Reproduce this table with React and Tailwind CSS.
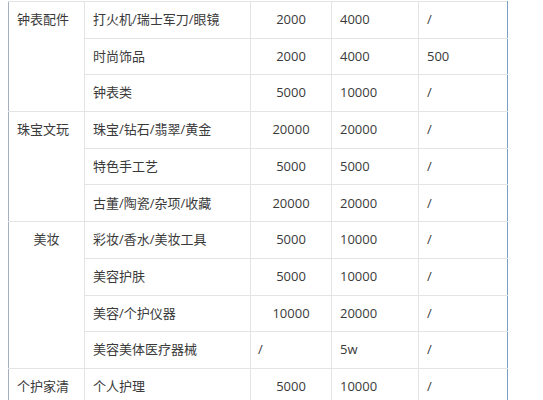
import React from "react";

const rows = [
  { g: "钟表配件", span: 3, name: "打火机/瑞士军刀/眼镜", a: "2000", b: "4000", c: "/" },
  { name: "时尚饰品", a: "2000", b: "4000", c: "500" },
  { name: "钟表类", a: "5000", b: "10000", c: "/" },
  { g: "珠宝文玩", span: 3, name: "珠宝/钻石/翡翠/黄金", a: "20000", b: "20000", c: "/" },
  { name: "特色手工艺", a: "5000", b: "5000", c: "/" },
  { name: "古董/陶瓷/杂项/收藏", a: "20000", b: "20000", c: "/" },
  { g: "美妆", span: 4, center: true, name: "彩妆/香水/美妆工具", a: "5000", b: "10000", c: "/" },
  { name: "美容护肤", a: "5000", b: "10000", c: "/" },
  { name: "美容/个护仪器", a: "10000", b: "20000", c: "/" },
  { name: "美容美体医疗器械", a: "/", aLeft: true, b: "5w", c: "/" },
  { g: "个护家清", span: 1, name: "个人护理", a: "5000", b: "10000", c: "/" },
];

export default function App() {
  return (
    <div
      className="w-[543px] h-[400px] overflow-hidden bg-white pl-[8px] pt-[1px] text-[13px] text-[#3a3a3a]"
      style={{ fontFamily: '"Open Sans", "Noto Sans CJK SC", sans-serif' }}
    >
      <table className="border-collapse table-fixed w-[499px] border-l border-l-[#a4b0bd] border-r border-r-[#7f9fc2]">
        <colgroup>
          <col className="w-[76px]" />
          <col className="w-[166px]" />
          <col className="w-[81px]" />
          <col className="w-[87px]" />
          <col className="w-[89px]" />
        </colgroup>
        <tbody>
          {rows.map((r, i) => (
            <tr key={i} className="h-[36.7px]">
              {r.g && (
                <td
                  rowSpan={r.span}
                  className={`border border-[#e4e4e4] border-l-[#a4b0bd] align-top pt-[8px] ${r.center ? "text-center" : "pl-[8px]"}`}
                >
                  {r.g}
                </td>
              )}
              <td className="border border-[#e4e4e4] pl-[8px]">{r.name}</td>
              <td className={`border border-[#e4e4e4] ${r.aLeft ? "pl-[7px] text-left" : "text-center"}`}>{r.a}</td>
              <td className="border border-[#e4e4e4] pl-[8px]">{r.b}</td>
              <td className="border border-[#e4e4e4] border-r-[#7f9fc2] pl-[8px]">{r.c}</td>
            </tr>
          ))}
        </tbody>
      </table>
    </div>
  );
}
